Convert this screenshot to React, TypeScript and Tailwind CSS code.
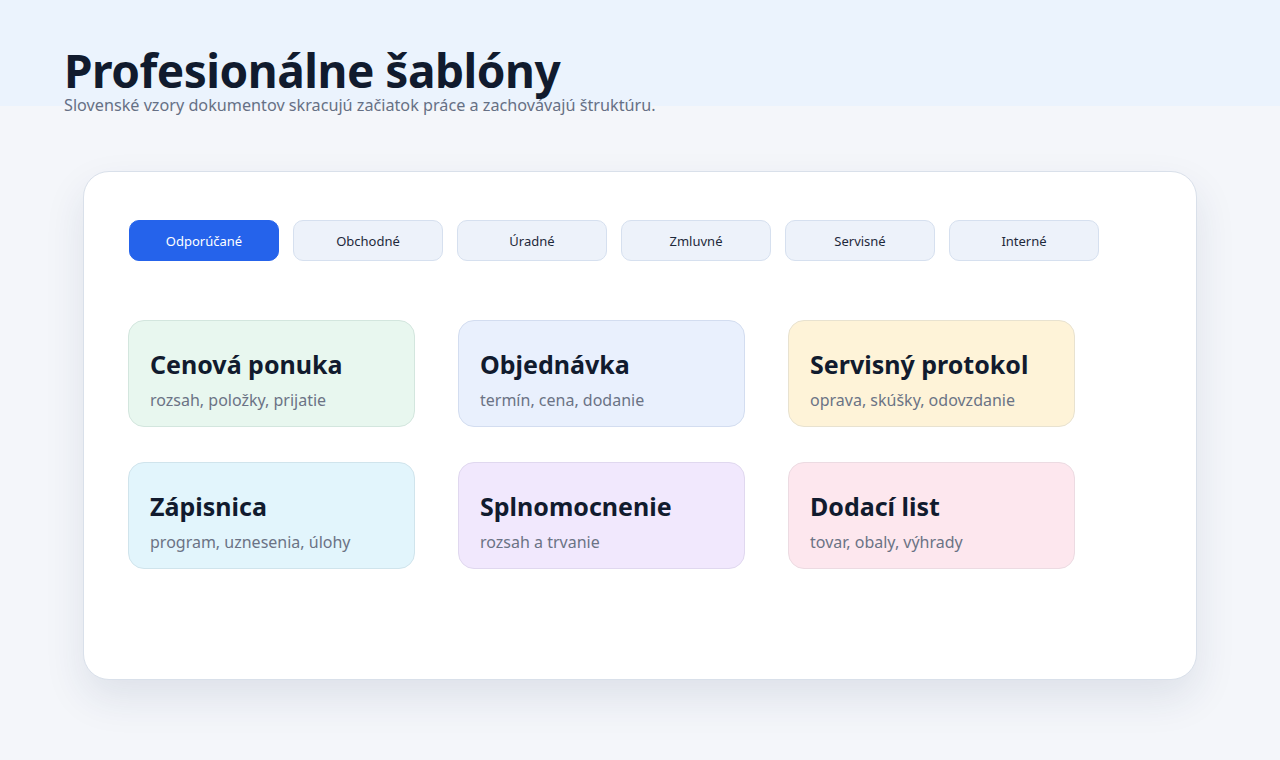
export default function App() {
  const tabs = ["Odporúčané", "Obchodné", "Úradné", "Zmluvné", "Servisné", "Interné"];
  const templates = [
    { title: "Cenová ponuka", desc: "rozsah, položky, prijatie", cls: "bg-[#e8f7ef] border-[#d3e6de]" },
    { title: "Objednávka", desc: "termín, cena, dodanie", cls: "bg-[#e9f0fd] border-[#d3ddf0]" },
    { title: "Servisný protokol", desc: "oprava, skúšky, odovzdanie", cls: "bg-[#fef3d8] border-[#e8e2d0]" },
    { title: "Zápisnica", desc: "program, uznesenia, úlohy", cls: "bg-[#e2f5fc] border-[#d0e4ec]" },
    { title: "Splnomocnenie", desc: "rozsah a trvanie", cls: "bg-[#f1e8fd] border-[#e0d8ef]" },
    { title: "Dodací list", desc: "tovar, obaly, výhrady", cls: "bg-[#fde7ee] border-[#ecdbe2]" },
  ];

  return (
    <div className="min-h-[760px] bg-[linear-gradient(to_bottom,#ebf3fd_106px,#f4f6fa_106px)] font-['Noto_Sans',sans-serif] text-[#111b2e]">
      <header className="px-16 pt-[45px]">
        <h1 className="text-[46px] font-bold leading-[50px] tracking-[-0.5px]">Profesionálne šablóny</h1>
        <p className="text-[16.2px] leading-[20px] text-[#667085]">
          Slovenské vzory dokumentov skracujú začiatok práce a zachovávajú štruktúru.
        </p>
      </header>

      <main className="px-[83px] pt-[56px]">
        <section className="h-[509px] rounded-[26px] border border-[#d9e0ea] bg-white px-[45px] pt-[48px] shadow-[0_18px_40px_rgba(30,50,90,0.10)]">
          <div className="flex gap-[14px]">
            {tabs.map((t, i) => (
              <button
                key={t}
                className={
                  i === 0
                    ? "h-[41px] w-[150px] rounded-[10px] border border-[#2563eb] bg-[#2563eb] pt-[3px] text-[13px] text-white"
                    : "h-[41px] w-[150px] rounded-[10px] border border-[#d6e0ef] bg-[#edf2fa] pt-[3px] text-[13px] text-[#1e293b]"
                }
              >
                {t}
              </button>
            ))}
          </div>

          <div className="-ml-px mt-[59px] grid grid-cols-[287px_287px_287px] gap-x-[43px] gap-y-[35px]">
            {templates.map((c) => (
              <div key={c.title} className={`h-[107px] rounded-[16px] border px-[21px] pt-[26px] ${c.cls}`}>
                <div className="text-[25px] font-bold leading-[34px]">{c.title}</div>
                <div className="mt-[8px] text-[16px] leading-[22px] text-[#6b7385]">{c.desc}</div>
              </div>
            ))}
          </div>
        </section>
      </main>
    </div>
  );
}
